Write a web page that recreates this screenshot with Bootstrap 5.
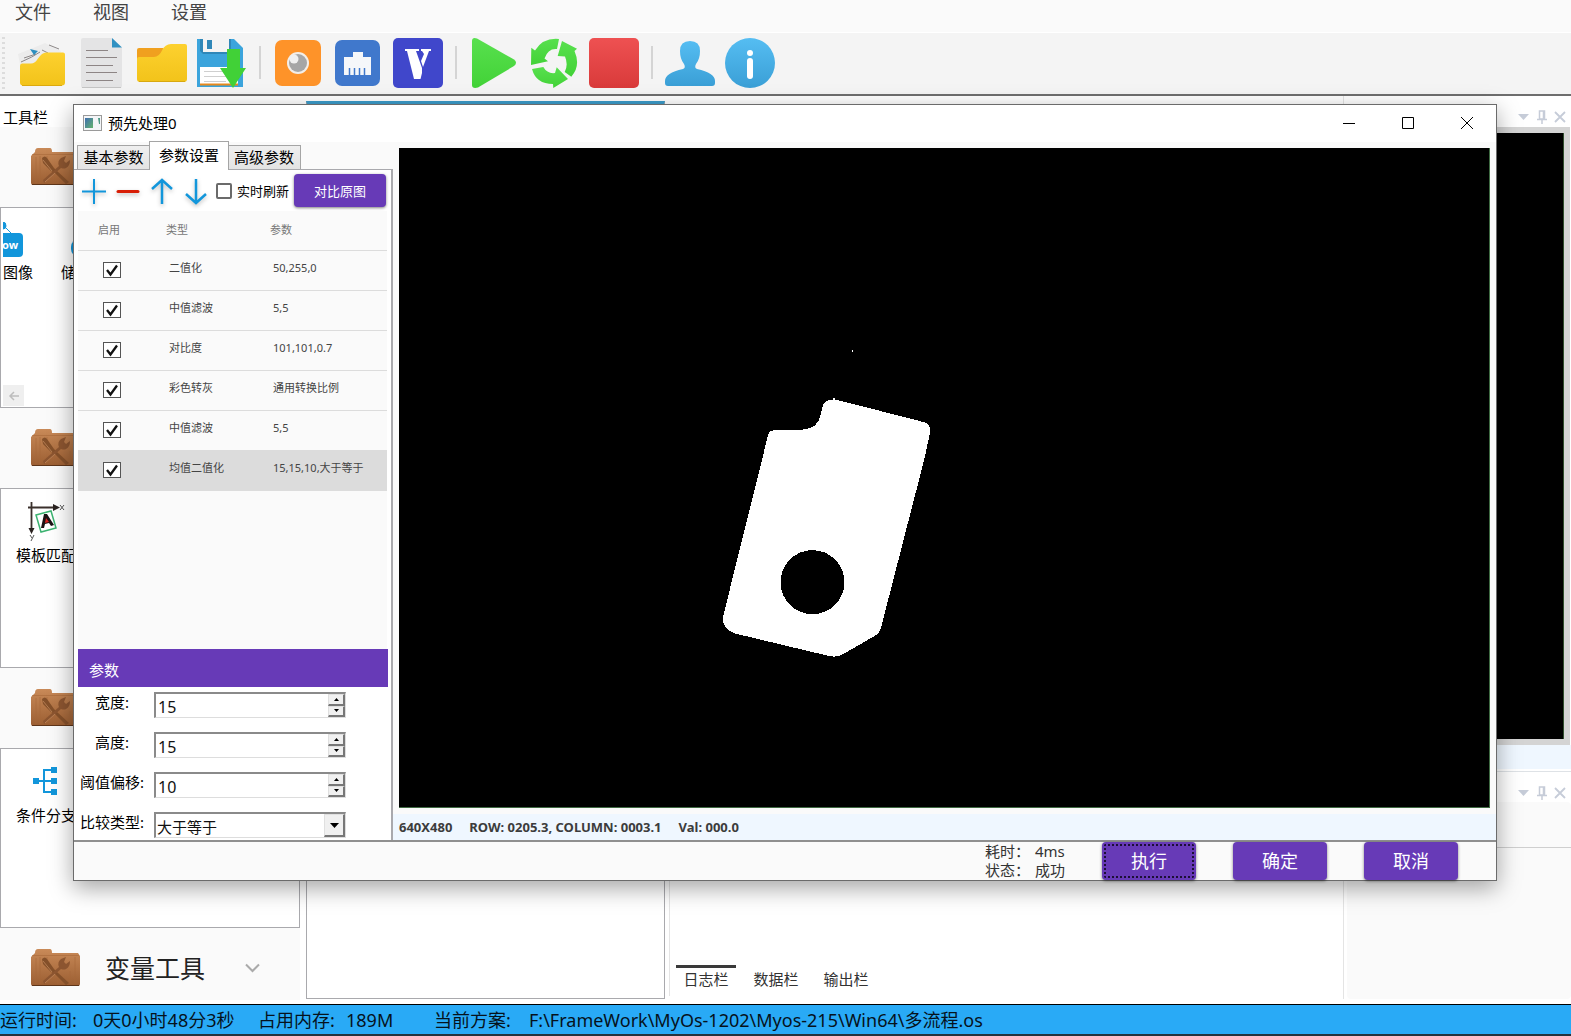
<!DOCTYPE html>
<html lang="zh-CN">
<head>
<meta charset="utf-8">
<meta name="viewport" content="width=device-width, initial-scale=1">
<title>预先处理0</title>
<link rel="stylesheet" href="https://cdn.jsdelivr.net/npm/bootstrap@5.3.0/dist/css/bootstrap.min.css">
<style>
:root{--violet:#673ab7;--edge:#a9a9ad;--face:#fafafa}
body{font-family:"Noto Sans","Noto Sans CJK SC",sans-serif;font-size:15px;line-height:20px;color:#000;background:#fff;overflow:hidden}
button{font-family:inherit}
.menu-bar{height:33px;background:var(--face);border-bottom:1px solid #fff;padding:0 15px;gap:42px}
.menu-bar a{font-size:18px;line-height:24px;color:#444;text-decoration:none}
.tool-strip{height:63px;background:#f4f4f4;border-bottom:2px solid #6e6e6e;padding:0 2px 2px;gap:10px}
.tool-grip{width:3px;height:52px;background:repeating-linear-gradient(#dcdcdc 0 2px,transparent 2px 5px);margin-right:2px}
.tool-btn{width:50px;height:50px;border:0;padding:0;background:none}
.tool-btn svg{display:block}
.tool-sep{width:2px;height:33px;background:#d4d4d4;margin:0 2px}
.desk{min-height:0}
.left-dock{width:300px}
.dock-title{height:31px;padding:9px 3px 0;line-height:24px}
.group-head{height:80px;background:var(--face);padding-left:31px;gap:24px;border:0;text-align:left;font-size:25px;color:#222;width:100%}
.group-body{height:180px;background:#fff;border:1px solid var(--edge);padding:12px 15px}
.group-body.tall{height:201px;padding:14px 2px}
.tool-item{width:60px;text-align:center;line-height:20px}
.tool-item svg{display:block;margin:0 auto}
.scroll-left{width:21px;height:21px;background:#efefef;border:0;padding:0;color:#bbb}
.flow-dock{width:359px;border:1px solid var(--edge);border-top:3px solid #3c9ccb;margin:5px 0 5px 6px}
.log-dock{border-left:1px solid #e4e4e4;margin:10px 3px 8px 4px;padding:0 6px}
.log-tabs button{border:0;background:none;height:31px;width:60px;padding:0 0 6px;border-top:3px solid transparent;color:#333}
.log-tabs .active{border-top-color:#3a3a3a}
.right-dock{width:228px;border-left:1px solid #e4e4e4;margin-bottom:5px}
.dock-tools{height:31px;padding:9px 5px 0;gap:6px}
.dock-tools button{border:0;background:none;padding:0;width:12px;height:24px;line-height:0}
.dock-tools svg{display:block}
.view-back{height:618px;background:#d4d4d4;padding:6px 6px 6px 0;margin-right:1px}
.view-black{background:#000;border-right:1px solid #31502f}
.view-info{height:24px;background:#eff7ff;margin-bottom:2px}
.prop-box{background:var(--face);border-radius:4px;margin-left:3px}
.prop-box div{height:46px;border-bottom:1px solid #cfcfcf}
.status-bar{height:32px;background:#29aaf6;border-top:1px solid #000;border-bottom:2px solid #24333d;font-size:18px;line-height:30px;color:#06121c}
.status-bar span{white-space:pre}

/* floating tool window */
.tool-window{position:absolute;left:73px;top:104px;right:74px;bottom:155px;background:var(--face);border:1px solid #6b6b6b;box-shadow:0 7px 22px rgba(0,0,0,.36)}
.title-bar{height:37px;background:#fff;padding:0 0 2px 9px}
.title-bar .cap{margin-left:6px}
.title-bar button{width:59px;height:35px;border:0;background:none;padding:0}
.title-bar button svg{display:block;margin:0 auto}
.win-body{border-bottom:2px solid #8f8f8f;min-height:0}
.side{width:319px}
.side-tabs{padding-left:3px;height:28px;border:0}
.side-tabs button{height:25px;width:73px;padding:0 0 3px;border:1px solid #a5a5a5;border-bottom:0;background:linear-gradient(#efefef,#e3e3e3);color:#000;line-height:20px}
.side-tabs button + button + button{border-left:0}
.side-tabs .active{height:29px;width:80px;background:#fff;margin:0 -1px;z-index:1}
.side-pane{border:1px solid var(--edge);border-width:1px 2px 0 0;background:#fff;padding:0 4px;min-height:0;margin-top:-1px}
.side-actions{height:41px;padding-left:1px}
.icon-btn{border:0;background:none;padding:0;width:34px;height:30px}
.icon-btn svg{display:block;filter:drop-shadow(0 2px 2px rgba(0,0,0,.25))}
.tick{appearance:none;width:16px;height:16px;margin:0 0 0 1px;border:2px solid #6b6b6b;border-radius:2px;background:#fff}
.side-actions label{font-size:13px;margin:0 5px;white-space:nowrap}
.violet{background:var(--violet);color:#fff;border:0;border-radius:4px;box-shadow:0 1px 3px rgba(0,0,0,.5)}
.compare{width:92px;height:33px;font-size:13px;padding:0}
.step-wrap{background:var(--face)}
.step-table{width:100%;font-size:11px;line-height:16px;color:#444;border-collapse:collapse;table-layout:fixed}
.step-table th{font-weight:400;color:#777;height:39px;border-bottom:1px solid #dcdcdc;padding:0 0 0 20px}
.step-table td{height:40px;border-bottom:1px solid #dcdcdc;padding:0 0 4px 23px}
.step-table th + th,.step-table td + td{padding-left:0}
.step-table td + td{padding-left:3px}
.step-table td:first-child{padding:0 0 0 24px}
.step-table tr.picked td{background:#dcdcdc}
.step-table .tick{width:18px;height:16px;border-radius:0;border:1px solid #555;display:block;background:#fff url("data:image/svg+xml,%3Csvg xmlns='http://www.w3.org/2000/svg' viewBox='0 0 16 14'%3E%3Cpath d='M3 7l3.500 4.500L13 2.500' fill='none' stroke='%23111' stroke-width='2.300'/%3E%3C/svg%3E") center/16px 14px no-repeat}
.param-head{background:var(--violet);color:#fff;height:38px;padding:5px 11px 0;line-height:32px;margin-right:-1px}
.param-form{height:153px;padding:5px 0 0 1px;gap:14px;overflow:hidden}
.param-row{height:26px;gap:9px}
.param-row label{width:66px;text-align:center;white-space:nowrap;line-height:20px}
.sunken{width:192px;height:26px;border:2px solid #8a8a8a;border-right:1px solid #ddd;border-bottom:1px solid #ddd;background:#fff;padding:0}
.sunken input,.sunken select{border:0;outline:0;padding:2px 0 0 2px;font-size:16px;line-height:20px;min-width:0;width:0;background:none;color:#111;appearance:none}
.sunken select{padding-left:1px;font-size:15px}
.spin{width:17px;flex:none}
.spin button,.drop-face{border:1px solid #e0e0e0;border-right:2px solid #777;border-bottom:2px solid #777;background:#f0f0f0;padding:0;line-height:0}
.drop-face{width:21px;flex:none;pointer-events:none}
.image-pane{background:#000;border:solid #3f6a42;border-width:0 1px 1px 0;margin:6px 6px 0;min-height:0}
.image-pane svg{display:block;width:100%;height:100%}
.image-info{height:26px;background:#eff7ff;margin-top:6px;padding:0 6px;gap:17px;font-size:13px;font-weight:700;line-height:26px;color:#3c3c3c}
.win-foot{height:38px;padding-right:38px}
.win-foot .violet{width:94px;height:38px;font-size:18px;padding:0}
.run-note{line-height:18px;color:#333;margin-right:39px;gap:0 15px;display:grid;grid-template-columns:35px 28px}
.run-note span{white-space:nowrap}
.btn-row{gap:37px}
.ring{outline:2px dotted #1c0f36;outline-offset:-4px}
</style>
</head>
<body class="d-flex flex-column vh-100">
<svg width="0" height="0" class="position-absolute" aria-hidden="true">
  <defs>
    <linearGradient id="gy" x2="0" y2="1"><stop stop-color="#fdd12f"/><stop offset="1" stop-color="#f2c31a"/></linearGradient>
    <linearGradient id="gg" x2="0" y2="1"><stop stop-color="#58e04e"/><stop offset="1" stop-color="#42d237"/></linearGradient>
    <linearGradient id="gr" x2="0" y2="1"><stop stop-color="#ee5152"/><stop offset="1" stop-color="#d93a3a"/></linearGradient>
    <linearGradient id="gb" x2="0" y2="1"><stop stop-color="#55bdf2"/><stop offset="1" stop-color="#3a9fd6"/></linearGradient>
    <linearGradient id="gw" x2="0" y2="1"><stop stop-color="#c98a58"/><stop offset="1" stop-color="#9b5e32"/></linearGradient>
    <symbol id="wood" viewBox="0 0 50 38">
      <path d="M4 4Q4 0 7 0h12q2 0 2 4h26l2 3v28q0 2-2 2H2q-2 0-2-2V8Z" fill="url(#gw)"/>
      <path d="M1 6.500h47M5 9v26M9 8v27M16 8v10M27 24v11M39 22v12M44 8v26" stroke="#a8693b" stroke-width="1" opacity=".6" fill="none"/>
      <path d="M1 36.500h47" stroke="#5e3519"/>
      <path d="M11 10q3-3 5 0l7 10 3 3 12 11-3 2-11-11-4-2-8-8Z" fill="#84502a"/>
      <path d="M13 35l-1-3 16-14q-2-5 2-8l5-2-2 5 2 2 4-3q0 6-4 8-2 1-5 0Z" fill="#8c5530"/>
      <path d="M14 34l10-9M12 12l9 11" stroke="#c99064" stroke-width="1" opacity=".7"/>
    </symbol>
    <symbol id="pin" viewBox="0 0 12 14"><path d="M3.500 1h5v8h-5zM7.500 1v8M1 9.500h10M6 10v4" fill="none" stroke="#c6ccd8" stroke-width="1.500"/></symbol>
    <symbol id="shut" viewBox="0 0 12 12"><path d="M1 1l10 10M11 1L1 11" stroke="#c6ccd8" stroke-width="1.800"/></symbol>
    <symbol id="tri" viewBox="0 0 12 12"><path d="M0 3h11L5.500 9Z" fill="#c6ccd8"/></symbol>
  </defs>
</svg>

<nav class="menu-bar d-flex flex-shrink-0"><a href="#">文件</a><a href="#">视图</a><a href="#">设置</a></nav>

<div class="tool-strip d-flex align-items-center flex-shrink-0">
  <div class="tool-grip"></div>
  <button class="tool-btn" aria-label="新建"><svg viewBox="0 0 50 50"><path d="M1 16l15-6 12-5 16 8-6 12-34 6Z" fill="#ececec"/><path d="M4 24q12-5 19-10M7 20l12-4M25 12l6 3M32 7l10 4" stroke="#8d8888" fill="none"/><path d="M13 11l8 2-4 4Z" fill="#2e8fc0"/><path d="M3 28q0-2.500 2-2.500h9q4 0 7-5 4-6 8-6h17q2 0 2 2v28q0 3-3 3H6q-3 0-3-3Z" fill="url(#gy)"/><path d="M5 47.500h40" stroke="#dba90f"/></svg></button>
  <button class="tool-btn" aria-label="文档"><svg viewBox="0 0 50 50"><path d="M4 2q0-2 2-2h29l10 10v38q0 2-2 2H6q-2 0-2-2Z" fill="#e4e4e5"/><path d="M35 0l10 9.500H35Z" fill="#3091c2"/><path d="M9 12.500h22M9 19.500h31M9 27.500h27M9 34.500h31M9 42.500h27" stroke="#8d8585"/><path d="M5 49.500h39" stroke="#c4c4c4"/></svg></button>
  <button class="tool-btn" aria-label="打开"><svg viewBox="0 0 50 50"><path d="M0 12q0-2 2-2h24v12H0Z" fill="#f0a01f"/><path d="M0 21q0-2 2-2h15q5 0 8-6.500 3-6.500 9-6.500h14q2 0 2 2v33q0 3-3 3H3q-3 0-3-3Z" fill="url(#gy)"/><path d="M2 43.500h46" stroke="#d8a80f"/></svg></button>
  <button class="tool-btn" aria-label="保存"><svg viewBox="0 0 50 50"><path d="M0 1h37l9 9v39H0Z" fill="#3ba4dc"/><path d="M3 1h31v15H6l-3-3Z" fill="#2f87b8"/><path d="M6 1h26v13H6Z" fill="#f4f4f4"/><path d="M10 2h5v9h-5Z" fill="#2f87b8"/><path d="M3 29h38v18H3Z" fill="#fff"/><path d="M7 33.500h22M7 38.500h22M7 43.500h22" stroke="#cfcfcf"/><path d="M3 46.500h38" stroke="#e8891d" stroke-width="2"/><path d="M30 11h13v19h6L36 50 23 30h7Z" fill="#41d137"/></svg></button>
  <div class="tool-sep"></div>
  <button class="tool-btn" aria-label="相机"><svg viewBox="0 0 50 50"><rect x="2" y="2" width="46" height="46" rx="7" fill="#fe9329"/><circle cx="25" cy="25" r="11" fill="#f3eee9"/><circle cx="25" cy="25" r="9" fill="#a6a6a6"/><circle cx="21" cy="21" r="4.500" fill="#f0f0f0"/></svg></button>
  <button class="tool-btn" aria-label="网络"><svg viewBox="0 0 50 50"><rect x="2" y="2" width="45" height="46" rx="7" fill="#4078cc"/><path d="M11 19h9v-5h10v5h8v18H11Z" fill="#f5f7fa"/><path d="M16.500 30v7M21.500 30v7M26.500 30v7M31.500 30v7" stroke="#4078cc" stroke-width="1.500"/></svg></button>
  <button class="tool-btn" aria-label="变量"><svg viewBox="0 0 50 50"><rect width="50" height="50" rx="5" fill="#4047cb"/><path d="M12 11h14v2h-3l6 17v5l-1.500 6H21L14 13h-2ZM28 11h10v2h-2l-6 16-2-6 3-7-2-3h-1Z" fill="#fff"/></svg></button>
  <div class="tool-sep"></div>
  <button class="tool-btn" aria-label="运行"><svg viewBox="0 0 50 50"><path d="M3 3q0-4 5-2.500l37 21q4 3 0 6.500L9 49.500q-6 1.500-6-2.500Z" fill="url(#gg)"/></svg></button>
  <button class="tool-btn" aria-label="循环"><svg viewBox="0 0 50 50"><g fill="url(#gg)"><path d="M30 1l-2 10q-9-1-12.500 9.500L19 23.300 2 27l.3-17.300L6 12.500Q14-.5 30 1Z"/><path d="M33 3l15 7.700-2.500 2.300q6.500 15-3.200 25.700L35.700 34q3.800-7 .3-15.500L28.700 18Z"/><path d="M3 31l11.300-2q4 7 11.700 6l1.700-5.700L39 41l-14.700 9-.3-4Q7 46 3 31Z"/></g></svg></button>
  <button class="tool-btn" aria-label="停止"><svg viewBox="0 0 50 50"><rect width="50" height="50" rx="5" fill="url(#gr)"/></svg></button>
  <div class="tool-sep"></div>
  <button class="tool-btn" aria-label="用户"><svg viewBox="0 0 50 50"><path d="M15 13q0-10 10-10t10 10q0 8-4 13-2 4 1 5 18 4 18 12v2q0 3-3 3H3q-3 0-3-3v-2q0-8 18-12 3-1 1-5-4-5-4-13Z" fill="url(#gb)"/></svg></button>
  <button class="tool-btn" aria-label="关于"><svg viewBox="0 0 50 50"><circle cx="25" cy="25" r="25" fill="url(#gb)"/><circle cx="25" cy="15" r="3" fill="#fff"/><rect x="22" y="20" width="6" height="21" rx="3" fill="#fff"/></svg></button>
</div>

<main class="desk d-flex flex-grow-1">
  <aside class="left-dock d-flex flex-column flex-shrink-0 overflow-hidden">
    <div class="dock-title flex-shrink-0">工具栏</div>
    <div class="flex-grow-1 overflow-hidden mb-1" style="min-height:0">
      <button class="group-head d-flex align-items-center" aria-label="图像工具"><svg width="50" height="38"><use href="#wood"/></svg></button>
      <div class="group-body tall d-flex flex-column justify-content-between">
        <div class="d-flex gap-4">
          <div class="tool-item text-start" style="width:34px"><svg class="m-0 mb-1" width="20" height="36" viewBox="0 0 20 36"><path d="M0 0q3 0 3 4 0 3-3 3M2 5l6 6" fill="#1296db" stroke="#1296db"/><path d="M0 11h16q4 0 4 4v16q0 4-4 4H0Z" fill="#1296db"/><text x="-1" y="27" font-size="11" font-weight="700" fill="#fff" font-family="Noto Sans">ow</text></svg>图像</div>
          <div class="tool-item text-start"><svg class="m-0 mb-1" width="40" height="36"><rect x="10" y="17" width="28" height="18" rx="8" fill="#1296db"/></svg>储</div>
        </div>
        <button class="scroll-left" style="margin-bottom:-13px" aria-label="向左"><svg width="12" height="10" viewBox="0 0 12 10" class="d-block mx-auto"><path d="M11 5H2M6 1L2 5l4 4" fill="none" stroke="#bdbdbd" stroke-width="1.500"/></svg></button>
      </div>
      <button class="group-head d-flex align-items-center" aria-label="定位工具"><svg width="50" height="38"><use href="#wood"/></svg></button>
      <div class="group-body">
        <div class="tool-item"><svg class="mb-1" width="40" height="40" viewBox="0 0 40 40"><path d="M2 6.500h27M5.500 1v29" stroke="#3a302c" stroke-width="1.800"/><path d="M27 3l7 3.500-7 3.500ZM2.500 27h6l-3 6Z" fill="#2a2220"/><path d="M34 4l4 5M38 4l-4 5M4 34l2 3M8 34l-3 6" stroke="#555"/><path d="M10 14l15-4 5 17-15 4Z" fill="none" stroke="#3cb371" stroke-width="1.500"/><path d="M15 27l3-14h3l7 11-3 1-2-3-4 1-1 4Z" fill="#1c1214"/><path d="M20 17l3 4-4 1Z" fill="#d22"/></svg>模板匹配</div>
      </div>
      <button class="group-head d-flex align-items-center" aria-label="逻辑工具"><svg width="50" height="38"><use href="#wood"/></svg></button>
      <div class="group-body">
        <div class="tool-item"><svg class="mb-1" width="40" height="40" viewBox="0 0 40 40"><path d="M10 20h20M30 9H18v22h12" fill="none" stroke="#1296db" stroke-width="2"/><path d="M7 17h6v6H7ZM25 6h6v6h-6ZM25 17h6v6h-6ZM25 28h6v6h-6Z" fill="#1296db"/></svg>条件分支</div>
      </div>
      <button class="group-head d-flex align-items-center"><svg width="50" height="38"><use href="#wood"/></svg>变量工具<svg width="15" height="10" viewBox="0 0 15 10" class="ms-3"><path d="M1 1.500l6.500 6.500L14 1.500" fill="none" stroke="#aaa" stroke-width="2"/></svg></button>
    </div>
  </aside>
  <section class="flow-dock flex-shrink-0"></section>
  <section class="log-dock flex-grow-1 d-flex align-items-end">
    <div class="log-tabs d-flex" style="gap:10px"><button class="active">日志栏</button><button>数据栏</button><button>输出栏</button></div>
  </section>
  <aside class="right-dock d-flex flex-column flex-shrink-0">
    <div class="dock-tools d-flex justify-content-end">
      <button aria-label="菜单"><svg width="12" height="12"><use href="#tri"/></svg></button><button aria-label="固定"><svg width="12" height="14"><use href="#pin"/></svg></button><button aria-label="关闭"><svg width="12" height="12"><use href="#shut"/></svg></button>
    </div>
    <div class="view-back d-flex"><div class="view-black flex-grow-1"></div></div>
    <div class="view-info"></div>
    <div class="dock-tools d-flex justify-content-end border-top">
      <button aria-label="菜单"><svg width="12" height="12"><use href="#tri"/></svg></button><button aria-label="固定"><svg width="12" height="14"><use href="#pin"/></svg></button><button aria-label="关闭"><svg width="12" height="12"><use href="#shut"/></svg></button>
    </div>
    <div class="prop-box flex-grow-1"><div></div></div>
  </aside>
</main>

<footer class="status-bar d-flex flex-shrink-0">
  <span style="width:93px">运行时间:</span><span style="width:165px">0天0小时48分3秒</span><span style="width:88px">占用内存:</span><span style="width:88px">189M</span><span style="width:95px">当前方案:</span><span>F:\FrameWork\MyOs-1202\Myos-215\Win64\多流程.os</span>
</footer>

<div class="tool-window d-flex flex-column" role="dialog" aria-label="预先处理0">
  <header class="title-bar d-flex align-items-center flex-shrink-0">
    <svg width="19" height="16" viewBox="0 0 19 16"><defs><linearGradient id="ap" x2="1" y2="1"><stop stop-color="#3f6db0"/><stop offset="1" stop-color="#63b36d"/></linearGradient></defs><rect x=".5" y=".5" width="18" height="15" fill="#f3f5f7" stroke="#9a9a9a"/><path d="M2 3h8v10H2Z" fill="url(#ap)"/><path d="M15 3h2v6h-1Z" fill="#4f9a86"/></svg>
    <span class="cap me-auto">预先处理0</span>
    <button aria-label="最小化"><svg width="12" height="12"><path d="M0 6.500h12" stroke="#000"/></svg></button>
    <button aria-label="最大化"><svg width="12" height="12"><path d="M.5.5h11v11H.5Z" fill="none" stroke="#000"/></svg></button>
    <button aria-label="关闭"><svg width="12" height="12"><path d="M0 0l12 12M12 0L0 12" stroke="#000"/></svg></button>
  </header>
  <div class="win-body d-flex flex-grow-1">
    <div class="side d-flex flex-column flex-shrink-0">
      <div class="side-tabs d-flex align-items-end flex-shrink-0" role="tablist"><button role="tab">基本参数</button><button role="tab" class="active position-relative">参数设置</button><button role="tab">高级参数</button></div>
      <div class="side-pane d-flex flex-column flex-grow-1">
        <div class="side-actions d-flex align-items-center flex-shrink-0">
          <button class="icon-btn" aria-label="添加"><svg width="30" height="30"><path d="M3 15.500h24M15 3v25" stroke="#1296db" stroke-width="2"/></svg></button>
          <button class="icon-btn" aria-label="删除"><svg width="30" height="30"><path d="M5 15.500h20" stroke="#d81e06" stroke-width="3" stroke-linecap="round"/></svg></button>
          <button class="icon-btn" aria-label="上移"><svg width="30" height="30"><path d="M15 28V4M5 13L15 4l10 9" fill="none" stroke="#1296db" stroke-width="2.500"/></svg></button>
          <button class="icon-btn" aria-label="下移"><svg width="30" height="30"><path d="M15 3v24M5 18l10 9 10-9" fill="none" stroke="#1296db" stroke-width="2.500"/></svg></button>
          <input class="tick flex-shrink-0" type="checkbox" id="live"><label for="live">实时刷新</label>
          <button class="violet compare flex-shrink-0">对比原图</button>
        </div>
        <div class="step-wrap flex-grow-1">
          <table class="step-table">
            <colgroup><col style="width:88px"><col style="width:104px"><col></colgroup>
            <thead><tr><th>启用</th><th>类型</th><th>参数</th></tr></thead>
            <tbody>
              <tr><td><input class="tick" type="checkbox" checked aria-label="启用"></td><td>二值化</td><td>50,255,0</td></tr>
              <tr><td><input class="tick" type="checkbox" checked aria-label="启用"></td><td>中值滤波</td><td>5,5</td></tr>
              <tr><td><input class="tick" type="checkbox" checked aria-label="启用"></td><td>对比度</td><td>101,101,0.7</td></tr>
              <tr><td><input class="tick" type="checkbox" checked aria-label="启用"></td><td>彩色转灰</td><td>通用转换比例</td></tr>
              <tr><td><input class="tick" type="checkbox" checked aria-label="启用"></td><td>中值滤波</td><td>5,5</td></tr>
              <tr class="picked"><td><input class="tick" type="checkbox" checked aria-label="启用"></td><td>均值二值化</td><td>15,15,10,大于等于</td></tr>
            </tbody>
          </table>
        </div>
        <div class="param-head flex-shrink-0">参数</div>
        <div class="param-form d-flex flex-column flex-shrink-0">
          <div class="param-row d-flex flex-shrink-0"><label for="pw">宽度:</label><div class="sunken d-flex"><input id="pw" type="text" value="15" class="flex-grow-1"><div class="spin d-flex flex-column"><button class="flex-fill" aria-label="增加"><svg width="5" height="3"><path d="M0 3l2.500-3L5 3Z"/></svg></button><button class="flex-fill" aria-label="减少"><svg width="5" height="3"><path d="M0 0h5L2.500 3Z"/></svg></button></div></div></div>
          <div class="param-row d-flex flex-shrink-0"><label for="ph">高度:</label><div class="sunken d-flex"><input id="ph" type="text" value="15" class="flex-grow-1"><div class="spin d-flex flex-column"><button class="flex-fill" aria-label="增加"><svg width="5" height="3"><path d="M0 3l2.500-3L5 3Z"/></svg></button><button class="flex-fill" aria-label="减少"><svg width="5" height="3"><path d="M0 0h5L2.500 3Z"/></svg></button></div></div></div>
          <div class="param-row d-flex flex-shrink-0"><label for="po">阈值偏移:</label><div class="sunken d-flex"><input id="po" type="text" value="10" class="flex-grow-1"><div class="spin d-flex flex-column"><button class="flex-fill" aria-label="增加"><svg width="5" height="3"><path d="M0 3l2.500-3L5 3Z"/></svg></button><button class="flex-fill" aria-label="减少"><svg width="5" height="3"><path d="M0 0h5L2.500 3Z"/></svg></button></div></div></div>
          <div class="param-row d-flex flex-shrink-0"><label for="pc">比较类型:</label><div class="sunken d-flex"><select id="pc" class="flex-grow-1"><option>大于等于</option><option>小于等于</option></select><span class="drop-face d-flex align-items-center justify-content-center"><svg width="9" height="5"><path d="M0 0h9L4.500 5Z"/></svg></span></div></div>
        </div>
      </div>
    </div>
    <div class="d-flex flex-column flex-grow-1">
      <div class="image-pane flex-grow-1">
        <svg viewBox="399 148 1090 658" preserveAspectRatio="none" shape-rendering="crispEdges"><path d="M768 435q1-5 6-5l31-1q12-2 15-12l3-12q2-5 6-5h10l86 22q6 2 5 10l-5 24-44 171q-1 5-6 8l-33 19q-6 3-14 1l-92-22q-14-4-13-17Z" fill="#fff"/><circle cx="812.500" cy="581.500" r="32" fill="#000"/><path d="M852 350h1v2h-1ZM833 398h2v3h-2Z" fill="#fff"/></svg>
      </div>
      <div class="image-info d-flex flex-shrink-0"><span>640X480</span><span>ROW: 0205.3, COLUMN: 0003.1</span><span>Val: 000.0</span></div>
    </div>
  </div>
  <div class="win-foot d-flex justify-content-end flex-shrink-0">
    <div class="run-note"><span>耗时：</span><span>4ms</span><span>状态：</span><span>成功</span></div>
    <div class="btn-row d-flex"><button class="violet ring">执行</button><button class="violet">确定</button><button class="violet">取消</button></div>
  </div>
</div>
<script src="https://cdn.jsdelivr.net/npm/bootstrap@5.3.0/dist/js/bootstrap.bundle.min.js"></script>
</body>
</html>
